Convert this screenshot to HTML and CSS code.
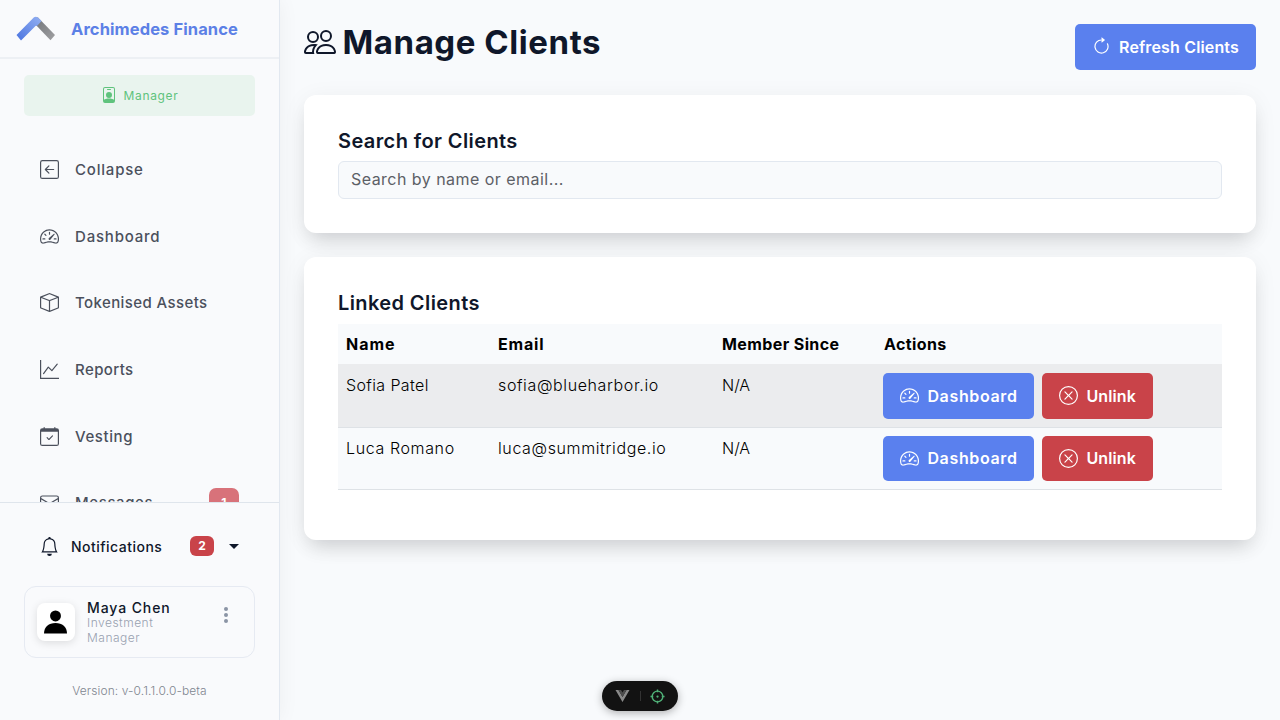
FILE: index.html
```html
<!DOCTYPE html>
<html lang="en">
<head>
    <meta charset="UTF-8">
    <meta name="viewport" content="width=device-width, initial-scale=1.0">
    <title>Manage Clients</title>
    <link rel="stylesheet" href="styles.css">
</head>
<body>
    <!-- icons -->
    <svg class="sprite">
        <symbol id="i-gauge" viewBox="0 0 16 16">
            <path d="M8 4a.5.5 0 0 1 .5.5V6a.5.5 0 0 1-1 0V4.5A.5.5 0 0 1 8 4zM3.732 5.732a.5.5 0 0 1 .707 0l.915.914a.5.5 0 1 1-.708.708l-.914-.915a.5.5 0 0 1 0-.707zM2 10a.5.5 0 0 1 .5-.5h1.586a.5.5 0 0 1 0 1H2.5A.5.5 0 0 1 2 10zm9.5 0a.5.5 0 0 1 .5-.5h1.5a.5.5 0 0 1 0 1H12a.5.5 0 0 1-.5-.5zm.754-4.246a.389.389 0 0 0-.527-.02L7.547 9.31a.91.91 0 1 0 1.302 1.258l3.434-4.297a.389.389 0 0 0-.029-.518z"/>
            <path d="M0 10a8 8 0 1 1 15.547 2.661c-.442 1.253-1.845 1.602-2.932 1.25C11.309 13.488 9.475 13 8 13c-1.474 0-3.31.488-4.615.911-1.087.352-2.49.003-2.932-1.25A7.988 7.988 0 0 1 0 10zm8-7a7 7 0 0 0-6.603 9.329c.203.575.923.876 1.68.63C4.397 12.533 6.358 12 8 12s3.604.532 4.923.96c.757.245 1.477-.056 1.68-.631A7 7 0 0 0 8 3z"/>
        </symbol>
        <symbol id="i-x" viewBox="0 0 16 16">
            <path d="M8 15A7 7 0 1 1 8 1a7 7 0 0 1 0 14zm0 1A8 8 0 1 0 8 0a8 8 0 0 0 0 16z"/>
            <path d="M4.646 4.646a.5.5 0 0 1 .708 0L8 7.293l2.646-2.647a.5.5 0 0 1 .708.708L8.707 8l2.647 2.646a.5.5 0 0 1-.708.708L8 8.707l-2.646 2.647a.5.5 0 0 1-.708-.708L7.293 8 4.646 5.354a.5.5 0 0 1 0-.708z"/>
        </symbol>
    </svg>

    <div class="sidebar">
        <div class="brand">
            <svg class="logo" viewBox="0 0 40 26">
                <defs>
                    <linearGradient id="blue" x1="0" y1="1" x2="1" y2="0">
                        <stop offset="0" stop-color="#4a74e0"/>
                        <stop offset="1" stop-color="#93b0f2"/>
                    </linearGradient>
                    <linearGradient id="grey" x1="0" y1="0" x2="1" y2="1">
                        <stop offset="0" stop-color="#6f7277"/>
                        <stop offset="1" stop-color="#a0a0a2"/>
                    </linearGradient>
                </defs>
                <path d="M20 1.5h2L39 19l-4.500 5.200L18 7z" fill="url(#grey)"/>
                <path d="M.5 19L18 1.200q2-1 4 .3L25.500 5 21.500 9.500 19.500 10 5 24.500z" fill="url(#blue)"/>
            </svg>
            <span class="brand-name">Archimedes Finance</span>
        </div>
        <div class="role">
            <svg viewBox="0 0 16 16"><path fill-rule="evenodd" d="M4 0h8a2 2 0 0 1 2 2v12a2 2 0 0 1-2 2H4a2 2 0 0 1-2-2V2a2 2 0 0 1 2-2zm0 1a1 1 0 0 0-1 1v10.800c1-.6 2.500-1.300 5-1.300s4 .7 5 1.300V2a1 1 0 0 0-1-1zM6.500 2h3a.5.5 0 0 1 0 1h-3a.5.5 0 0 1 0-1zM8 5a3 3 0 1 1 0 6 3 3 0 0 1 0-6z"/></svg>
            <span>Manager</span>
        </div>
        <ul class="nav">
            <li>
                <svg viewBox="0 0 16 16"><path d="M15 2a1 1 0 0 0-1-1H2a1 1 0 0 0-1 1v12a1 1 0 0 0 1 1h12a1 1 0 0 0 1-1V2zM0 2a2 2 0 0 1 2-2h12a2 2 0 0 1 2 2v12a2 2 0 0 1-2 2H2a2 2 0 0 1-2-2V2zm11.500 5.500a.5.5 0 0 1 0 1H5.707l2.147 2.146a.5.5 0 0 1-.708.708l-3-3a.5.5 0 0 1 0-.708l3-3a.5.5 0 1 1 .708.708L5.707 7.500H11.500z"/></svg>
                <span class="t-collapse">Collapse</span>
            </li>
            <li>
                <svg><use href="#i-gauge"/></svg>
                <span class="t-dashboard">Dashboard</span>
            </li>
            <li>
                <svg viewBox="0 0 16 16"><path d="M8.186 1.113a.5.5 0 0 0-.372 0L1.846 3.500 8 5.961 14.154 3.500 8.186 1.113zM15 4.239l-6.500 2.600v7.922l6.500-2.600V4.240zM7.500 14.762V6.838L1 4.239v7.923l6.500 2.600zM7.443.184a1.500 1.500 0 0 1 1.114 0l7.129 2.852A.5.5 0 0 1 16 3.500v8.662a1 1 0 0 1-.629.928l-7.185 2.874a.5.5 0 0 1-.372 0L.630 13.090a1 1 0 0 1-.630-.928V3.500a.5.5 0 0 1 .314-.464L7.443.184z"/></svg>
                <span>Tokenised Assets</span>
            </li>
            <li>
                <svg viewBox="0 0 16 16"><path d="M0 0h1v15h15v1H0V0Zm14.817 3.113a.5.5 0 0 1 .07.704l-4.500 5.500a.5.5 0 0 1-.74.037L7.060 6.767l-3.656 5.027a.5.5 0 0 1-.808-.588l4-5.500a.5.5 0 0 1 .758-.06l2.609 2.610 4.150-5.073a.5.5 0 0 1 .704-.07Z"/></svg>
                <span>Reports</span>
            </li>
            <li>
                <svg viewBox="0 0 16 16"><path d="M10.854 7.146a.5.5 0 0 1 0 .708l-3 3a.5.5 0 0 1-.708 0l-1.500-1.500a.5.5 0 1 1 .708-.708L7.500 9.793l2.646-2.647a.5.5 0 0 1 .708 0z"/><path d="M3.500 0a.5.5 0 0 1 .5.5V1h8V.5a.5.5 0 0 1 1 0V1h1a2 2 0 0 1 2 2v11a2 2 0 0 1-2 2H2a2 2 0 0 1-2-2V3a2 2 0 0 1 2-2h1V.5a.5.5 0 0 1 .5-.5zM1 4v10a1 1 0 0 0 1 1h12a1 1 0 0 0 1-1V4H1z"/></svg>
                <span class="t-vesting">Vesting</span>
            </li>
            <li>
                <svg viewBox="0 0 16 16"><path d="M0 4a2 2 0 0 1 2-2h12a2 2 0 0 1 2 2v8a2 2 0 0 1-2 2H2a2 2 0 0 1-2-2V4Zm2-1a1 1 0 0 0-1 1v.217l7 4.200 7-4.200V4a1 1 0 0 0-1-1H2Zm13 2.383-4.708 2.825L15 11.105V5.383Zm-.034 6.876-5.640-3.471L8 9.583l-1.326-.795-5.640 3.470A1 1 0 0 0 2 13h12a1 1 0 0 0 .966-.741ZM1 11.105l4.708-2.897L1 5.383v5.722Z"/></svg>
                <span class="t-messages">Messages</span>
                <span class="count">1</span>
            </li>
        </ul>
        <div class="bottom">
            <div class="notif">
                <svg viewBox="0 0 16 16"><path d="M8 16a2 2 0 0 0 2-2H6a2 2 0 0 0 2 2zM8 1.918l-.797.161A4.002 4.002 0 0 0 4 6c0 .628-.134 2.197-.459 3.742-.16.767-.376 1.566-.663 2.258h10.244c-.287-.692-.502-1.490-.663-2.258C12.134 8.197 12 6.628 12 6a4.002 4.002 0 0 0-3.203-3.920L8 1.917zM14.220 12c.223.447.481.801.78 1H1c.299-.199.557-.553.78-1C2.680 10.200 3 6.880 3 6c0-2.420 1.720-4.440 4.005-4.901a1 1 0 1 1 1.990 0A5.002 5.002 0 0 1 13 6c0 .88.32 4.200 1.220 6z"/></svg>
                <span>Notifications</span>
                <span class="badge">2</span>
                <i class="caret"></i>
            </div>
            <div class="user">
                <div class="avatar">
                    <svg viewBox="0 0 24 24"><circle cx="12" cy="5.700" r="5.700"/><path d="M0 24c0-7 5-11 12-11s12 4 12 11z"/></svg>
                </div>
                <div class="who">
                    <div class="user-name">Maya Chen</div>
                    <div class="user-role">Investment<br>Manager</div>
                </div>
                <div class="dots"><i></i><i></i><i></i></div>
            </div>
            <div class="version">Version: v-0.1.1.0.0-beta</div>
        </div>
    </div>

    <div class="main">
        <div class="top">
            <h1>
                <svg viewBox="0 0 16 16"><path d="M15 14s1 0 1-1-1-4-5-4-5 3-5 4 1 1 1 1h8Zm-7.978-1A.261.261 0 0 1 7 12.996c.001-.264.167-1.030.76-1.720C8.312 10.629 9.282 10 11 10c1.717 0 2.687.630 3.240 1.276.593.690.758 1.457.760 1.720l-.008.002a.274.274 0 0 1-.014.002H7.022ZM11 7a2 2 0 1 0 0-4 2 2 0 0 0 0 4Zm3-2a3 3 0 1 1-6 0 3 3 0 0 1 6 0ZM6.936 9.280a5.880 5.880 0 0 0-1.230-.247A7.350 7.350 0 0 0 5 9c-4 0-5 3-5 4 0 .667.333 1 1 1h4.216A2.238 2.238 0 0 1 5 13c0-1.010.377-2.042 1.090-2.904.243-.294.526-.569.846-.816ZM4.920 10A5.493 5.493 0 0 0 4 13H1c0-.260.164-1.030.760-1.724.545-.636 1.492-1.256 3.160-1.275ZM1.500 5.500a3 3 0 1 1 6 0 3 3 0 0 1-6 0Zm3-2a2 2 0 1 0 0 4 2 2 0 0 0 0-4Z"/></svg>
                <span>Manage Clients</span>
            </h1>
            <button class="btn refresh">
                <svg viewBox="0 0 16 16"><path d="M8 3a5 5 0 1 0 4.546 2.914.5.5 0 0 1 .908-.417A6 6 0 1 1 8 2v1z"/><path d="M8 4.466V.534a.25.25 0 0 1 .41-.192l2.360 1.966c.12.1.12.284 0 .384L8.410 4.658A.25.25 0 0 1 8 4.466z"/></svg>
                <span>Refresh Clients</span>
            </button>
        </div>

        <div class="card search">
            <h2>Search for Clients</h2>
            <input type="text" placeholder="Search by name or email...">
        </div>

        <div class="card linked">
            <h2>Linked Clients</h2>
            <table>
                <thead>
                    <tr>
                        <th class="c-name">Name</th>
                        <th class="c-email">Email</th>
                        <th class="c-since">Member Since</th>
                        <th>Actions</th>
                    </tr>
                </thead>
                <tbody>
                    <tr>
                        <td class="sofia">Sofia Patel</td>
                        <td>sofia@blueharbor.io</td>
                        <td class="since">N/A</td>
                        <td>
                            <div class="actions">
                                <button class="btn dash"><svg><use href="#i-gauge"/></svg><span>Dashboard</span></button>
                                <button class="btn unlink"><svg><use href="#i-x"/></svg><span>Unlink</span></button>
                            </div>
                        </td>
                    </tr>
                    <tr>
                        <td>Luca Romano</td>
                        <td>luca@summitridge.io</td>
                        <td class="since">N/A</td>
                        <td>
                            <div class="actions">
                                <button class="btn dash"><svg><use href="#i-gauge"/></svg><span>Dashboard</span></button>
                                <button class="btn unlink"><svg><use href="#i-x"/></svg><span>Unlink</span></button>
                            </div>
                        </td>
                    </tr>
                </tbody>
            </table>
        </div>
    </div>

    <!-- floating dev toolbar -->
    <div class="devbar">
        <svg class="vue" viewBox="0 0 14 12"><path d="M0 0h3l4 7 4-7h3L7 12z" fill="#8a8a8a"/><path d="M3 0h2.500L7 2.600 8.500 0H11L7 7z" fill="#4d4d4d"/></svg>
        <i class="sep"></i>
        <svg class="target" viewBox="0 0 16 16"><circle cx="8" cy="8" r="5.700"/><path d="M8 .5v3M8 12.500v3M.5 8h3M12.500 8h3"/><circle class="pt" cx="8" cy="8" r="1.200"/></svg>
    </div>
</body>
</html>
```
FILE: styles.css
```css
*{
    margin: 0;
    padding: 0;
    box-sizing: border-box;
}
body{
    display: flex;
    height: 720px;
    overflow: hidden;
    background: #f8fafc;
    color: #000;
    font-family: Inter, "Open Sans", sans-serif;
    font-size: 16px;
}
svg{
    display: block;
    flex: none;
    fill: currentColor;
}
span{
    white-space: nowrap;
}
.sprite{
    display: none;
}

/* sidebar */
.sidebar{
    display: flex;
    flex-direction: column;
    flex: none;
    width: 280px;
    height: 720px;
    background: #f9fafc;
    border-right: 1px solid #e2e8f0;
    box-shadow: 0 0 20px rgba(15,23,42,.05);
    z-index: 1;
}
.brand{
    display: flex;
    align-items: center;
    flex: none;
    height: 59px;
    padding-left: 16px;
    border-bottom: 2px solid #edf0f4;
}
.logo{
    width: 40px;
    height: 26px;
    margin-right: 15px;
}
.brand-name{
    color: #5c80e6;
    font-size: 16.5px;
    font-weight: 700;
    letter-spacing: .1px;
}
.role{
    display: flex;
    align-items: center;
    justify-content: center;
    flex: none;
    height: 41px;
    margin: 16px 24px 0;
    border-radius: 5px;
    background: #e9f4ee;
    color: #5fc37d;
    font-size: 12px;
    letter-spacing: .65px;
}
.role svg{
    width: 16px;
    height: 16px;
    margin: -1px 7px 0 0;
}
.nav{
    flex: 1;
    min-height: 0;
    overflow: hidden;
    padding: 20px 24px 0;
    list-style: none;
    color: #4b505c;
}
.nav li{
    display: flex;
    align-items: center;
    height: 66.700px;
    padding: 0 16px;
    font-size: 15px;
    font-weight: 500;
    letter-spacing: .4px;
}
.nav svg{
    width: 19px;
    height: 19px;
    margin-right: 16px;
}
.t-collapse,
.t-dashboard{
    letter-spacing: .8px;
}
.t-vesting,
.t-messages{
    letter-spacing: .6px;
}
.count{
    width: 30px;
    height: 29px;
    margin: -1px 0 0 auto;
    border-radius: 7px;
    background: #d8727a;
    color: #fff;
    font-size: 12px;
    font-weight: 700;
    line-height: 29px;
    text-align: center;
}
.bottom{
    flex: none;
    height: 218px;
    padding: 0 24px;
    border-top: 1px solid #dfe5ec;
}
.notif{
    display: flex;
    align-items: center;
    height: 83px;
    padding: 4px 16px 0;
    color: #0f172a;
    font-size: 14px;
    font-weight: 500;
    letter-spacing: .48px;
}
.notif svg{
    width: 19px;
    height: 19px;
    margin-right: 12px;
}
.badge{
    width: 24px;
    height: 20px;
    margin: -2px 15px 0 auto;
    border-radius: 6px;
    background: #c94349;
    color: #fff;
    font-size: 12px;
    font-weight: 700;
    letter-spacing: 0;
    line-height: 20px;
    text-align: center;
}
.caret{
    margin-top: -1px;
    border: 5px solid transparent;
    border-top: 5px solid #0f172a;
    border-bottom: 0;
}
.user{
    display: flex;
    height: 72px;
    padding: 12px;
    border: 1px solid #e6eaf2;
    border-radius: 12px;
}
.avatar{
    display: flex;
    align-items: center;
    justify-content: center;
    width: 38px;
    height: 38px;
    margin: 4px 12px 0 0;
    border-radius: 8px;
    background: #fff;
    box-shadow: 0 2px 8px rgba(0,0,0,.12);
}
.avatar svg{
    width: 23px;
    height: 24px;
    margin: -1px 1px 0 0;
    color: #000;
}
.user-name{
    height: 16px;
    color: #0f172a;
    font-size: 14px;
    font-weight: 500;
    letter-spacing: .9px;
    line-height: 18px;
}
.user-role{
    color: #98a1b0;
    font-size: 12px;
    font-weight: 300;
    letter-spacing: .5px;
    line-height: 15px;
}
.dots{
    display: flex;
    flex-direction: column;
    gap: 2px;
    margin: 8px 14px 0 auto;
}
.dots i{
    width: 4px;
    height: 4px;
    border-radius: 50%;
    background: #8b94a5;
}
.version{
    margin-top: 25px;
    color: #80858f;
    font-size: 12px;
    font-weight: 300;
    letter-spacing: .1px;
    line-height: 16px;
    text-align: center;
}

/* page */
.main{
    flex: 1;
    padding: 24px;
}
.top{
    display: flex;
    justify-content: space-between;
    height: 71px;
}
h1{
    display: flex;
    height: 36px;
    align-items: center;
    color: #0f172a;
    font-size: 33px;
    font-weight: 700;
    letter-spacing: .56px;
}
h1 svg{
    width: 32px;
    height: 32px;
    margin-right: 6.500px;
}
.btn{
    display: flex;
    align-items: center;
    height: 45.500px;
    padding-left: 17px;
    border: 0;
    border-radius: 5px;
    background: #5a80ee;
    color: #fff;
    font-family: inherit;
    font-size: 16px;
    font-weight: 600;
}
.btn svg{
    width: 19px;
    height: 19px;
    margin-right: 8px;
}
.refresh{
    width: 181px;
    letter-spacing: .15px;
}
.card{
    padding: 34px;
    border-radius: 12px;
    background: #fff;
    box-shadow: 0 4px 24px rgba(15,23,42,.06), 0 12px 20px -6px rgba(0,0,0,.14);
}
h2{
    height: 32px;
    color: #0f172a;
    font-size: 20px;
    font-weight: 600;
    letter-spacing: .4px;
    line-height: 24px;
}
.search{
    height: 138px;
    margin-bottom: 24px;
}
.search h2{
    height: 31.500px;
}
input{
    display: block;
    width: 100%;
    height: 38px;
    padding: 0 12px 1px;
    border: 1px solid #e2e8f0;
    border-radius: 6px;
    background: #f8fafc;
    font-family: inherit;
    font-size: 16px;
    letter-spacing: .46px;
}
input::placeholder{
    color: #5c6066;
}
.linked{
    height: 283px;
}
.linked h2{
    height: 33px;
}
table{
    width: 100%;
    border-collapse: collapse;
    table-layout: fixed;
    background: #f8fafc;
}
th,
td{
    padding: 8px;
    text-align: left;
    vertical-align: top;
    line-height: 24px;
}
th{
    height: 40px;
    font-weight: 700;
    letter-spacing: .4px;
}
td{
    height: 62px;
    border-bottom: 1px solid #dee2e6;
    font-weight: 300;
    letter-spacing: .62px;
}
.sofia{
    letter-spacing: .38px;
}
.since{
    letter-spacing: 0;
}
tbody tr:first-child{
    background: #ebecee;
}
tbody tr:first-child td{
    height: 63px;
    padding-top: 9px;
}
.c-name{
    width: 152px;
    letter-spacing: 1px;
}
.c-email{
    width: 224px;
    letter-spacing: .8px;
}
.c-since{
    width: 162px;
}
.actions{
    display: flex;
    gap: 8px;
    margin-left: -.6px;
}
.dash{
    width: 151px;
    letter-spacing: .65px;
}
.unlink{
    width: 111px;
    background: #c94349;
    letter-spacing: .1px;
}

/* toolbar */
.devbar{
    display: flex;
    align-items: center;
    position: absolute;
    left: 602px;
    top: 681px;
    width: 76px;
    height: 30px;
    padding: 0 13px;
    border-radius: 15px;
    background: #121212;
    box-shadow: 0 2px 8px rgba(0,0,0,.3);
}
.vue{
    width: 15px;
    height: 12px;
}
.sep{
    flex: none;
    width: 1px;
    height: 10px;
    margin: 0 9px 0 10px;
    background: #333;
}
.target{
    width: 15px;
    height: 15px;
    fill: none;
    stroke: #4fb077;
    stroke-width: 1.500;
}
.target .pt{
    fill: #4fb077;
    stroke: none;
}
```
